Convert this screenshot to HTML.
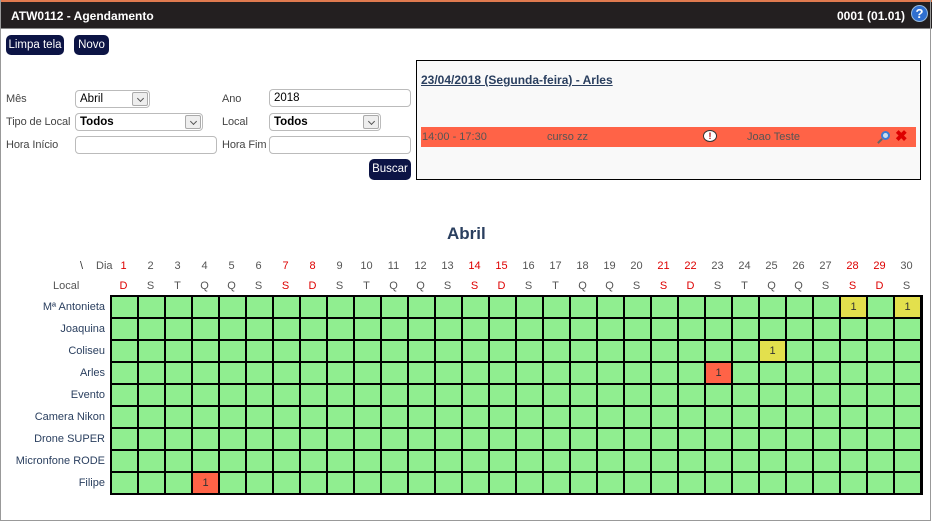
<!DOCTYPE html><html><head><meta charset="utf-8"><style>
*{margin:0;padding:0;box-sizing:border-box}
body{width:932px;height:522px;position:relative;background:#fff;font-family:"Liberation Sans",Arial,sans-serif;font-size:11px;color:#333;overflow:hidden}
.frame{position:absolute;left:0;top:0;width:931px;height:521px;border:1px solid #999;border-top:none}
.top{position:absolute;left:0;top:0;width:932px;height:2px;background:#e07a4f}
.bar{position:absolute;left:0;top:2px;width:932px;height:27px;background:#231f20;border-bottom:1px solid #888;color:#fff;font-weight:bold;font-size:12px}
.btn{position:absolute;background:#0c1445;color:#fff;border-radius:5px;font-size:11.5px;height:20px;line-height:20px;text-align:center}
.lbl{position:absolute;font-size:11px;color:#444;white-space:nowrap;letter-spacing:-0.1px}
.inp{position:absolute;border:1px solid #bbb;border-radius:4px;height:18px;background:#fff;font-size:11.5px;color:#000;padding-left:4px;line-height:16px}
.sel .ar{position:absolute;right:1px;top:1px;width:16px;height:14px;border:1px solid #aaa;border-radius:2px;background:#eee}
.sel .ar:after{content:"";position:absolute;left:5px;top:3px;width:4px;height:4px;border-right:1px solid #555;border-bottom:1px solid #555;transform:rotate(45deg)}
.grid{position:absolute;left:110px;top:295px;width:812px;height:200px;background-color:#90ee90;
background-image:linear-gradient(90deg,#000 2px,transparent 2px),linear-gradient(#000 2px,transparent 2px);background-size:27px 100%,100% 22px}
.c{position:absolute;width:25px;height:20px;text-align:center;line-height:20px;color:#333}
.y{background:#e3e04d}.r{background:#ff6347}
.h{position:absolute;width:27px;text-align:center;color:#555}
.red{color:#d00}
.rl{position:absolute;right:827px;color:#2a3f5f;white-space:nowrap}
</style></head><body>
<div class="top"></div>
<div class="bar"><span style="position:absolute;left:11px;top:7px">ATW0112 - Agendamento</span><span style="position:absolute;left:837px;top:7px">0001 (01.01)</span>
<span style="position:absolute;left:911px;top:3px;width:17px;height:17px;border-radius:50%;background:#2f6fd0;border:1px solid #9bd;color:#fff;text-align:center;line-height:16px;font-size:13px">?</span></div>
<div class="frame"></div>
<div class="btn" style="left:6px;top:35px;width:58px">Limpa tela</div>
<div class="btn" style="left:74px;top:35px;width:35px">Novo</div>
<div class="lbl" style="left:6px;top:93px">Mês</div>
<div class="inp sel" style="left:75px;top:90px;width:75px">Abril<span class="ar"></span></div>
<div class="lbl" style="left:222px;top:93px">Ano</div>
<div class="inp" style="left:269px;top:89px;width:142px">2018</div>
<div class="lbl" style="left:6px;top:116px">Tipo de Local</div>
<div class="inp sel" style="left:75px;top:113px;width:128px;font-weight:bold">Todos<span class="ar"></span></div>
<div class="lbl" style="left:222px;top:116px">Local</div>
<div class="inp sel" style="left:269px;top:113px;width:112px;font-weight:bold">Todos<span class="ar"></span></div>
<div class="lbl" style="left:6px;top:139px">Hora Início</div>
<div class="inp" style="left:75px;top:136px;width:142px"></div>
<div class="lbl" style="left:222px;top:139px">Hora Fim</div>
<div class="inp" style="left:269px;top:136px;width:142px"></div>
<div class="btn" style="left:369px;top:159px;height:21px;line-height:21px;width:42px">Buscar</div>
<div style="position:absolute;left:416px;top:60px;width:505px;height:120px;border:1px solid #000;background:#f9f9f9">
<div style="position:absolute;left:4px;top:12px;font-weight:bold;color:#2a3f5f;text-decoration:underline;font-size:12px">23/04/2018 (Segunda-feira) - Arles</div>
<div style="position:absolute;left:4px;top:66px;width:495px;height:20px;background:#ff6347;color:#555;line-height:20px">
<span style="position:absolute;left:1px">14:00 - 17:30</span><span style="position:absolute;left:126px">curso zz</span>
<span style="position:absolute;left:282px;top:3px;width:14px;height:12px;border-radius:50%;background:#fff;border:1px solid #333;font-size:9px;line-height:10px;text-align:center;color:#a00;font-weight:bold">!</span>
<span style="position:absolute;left:326px">Joao Teste</span>
<span style="position:absolute;left:460px;top:4px;width:9px;height:9px;border:2px solid #3a7bd5;border-radius:50%;background:#cde"></span>
<span style="position:absolute;left:456px;top:13px;width:6px;height:2px;background:#666;transform:rotate(-45deg)"></span>
<span style="position:absolute;left:474px;color:#d00;font-weight:bold;font-size:15px">✖</span></div></div>
<span style="position:absolute;left:447px;top:224px;font-size:17px;font-weight:bold;color:#2a3f5f">Abril</span>
<div style="position:absolute;top:260px;left:0;width:932px">
<span style="position:absolute;left:80px">\</span><span style="position:absolute;left:96px;color:#555">Dia</span>
<span class="h red" style="left:110px">1</span><span class="h" style="left:137px">2</span><span class="h" style="left:164px">3</span><span class="h" style="left:191px">4</span><span class="h" style="left:218px">5</span><span class="h" style="left:245px">6</span><span class="h red" style="left:272px">7</span><span class="h red" style="left:299px">8</span><span class="h" style="left:326px">9</span><span class="h" style="left:353px">10</span><span class="h" style="left:380px">11</span><span class="h" style="left:407px">12</span><span class="h" style="left:434px">13</span><span class="h red" style="left:461px">14</span><span class="h red" style="left:488px">15</span><span class="h" style="left:515px">16</span><span class="h" style="left:542px">17</span><span class="h" style="left:569px">18</span><span class="h" style="left:596px">19</span><span class="h" style="left:623px">20</span><span class="h red" style="left:650px">21</span><span class="h red" style="left:677px">22</span><span class="h" style="left:704px">23</span><span class="h" style="left:731px">24</span><span class="h" style="left:758px">25</span><span class="h" style="left:785px">26</span><span class="h" style="left:812px">27</span><span class="h red" style="left:839px">28</span><span class="h red" style="left:866px">29</span><span class="h" style="left:893px">30</span></div>
<div style="position:absolute;top:280px;left:0;width:932px">
<span style="position:absolute;left:53px;color:#555">Local</span>
<span class="h red" style="left:110px">D</span><span class="h" style="left:137px">S</span><span class="h" style="left:164px">T</span><span class="h" style="left:191px">Q</span><span class="h" style="left:218px">Q</span><span class="h" style="left:245px">S</span><span class="h red" style="left:272px">S</span><span class="h red" style="left:299px">D</span><span class="h" style="left:326px">S</span><span class="h" style="left:353px">T</span><span class="h" style="left:380px">Q</span><span class="h" style="left:407px">Q</span><span class="h" style="left:434px">S</span><span class="h red" style="left:461px">S</span><span class="h red" style="left:488px">D</span><span class="h" style="left:515px">S</span><span class="h" style="left:542px">T</span><span class="h" style="left:569px">Q</span><span class="h" style="left:596px">Q</span><span class="h" style="left:623px">S</span><span class="h red" style="left:650px">S</span><span class="h red" style="left:677px">D</span><span class="h" style="left:704px">S</span><span class="h" style="left:731px">T</span><span class="h" style="left:758px">Q</span><span class="h" style="left:785px">Q</span><span class="h" style="left:812px">S</span><span class="h red" style="left:839px">S</span><span class="h red" style="left:866px">D</span><span class="h" style="left:893px">S</span></div>
<span class="rl" style="top:301px">Mª Antonieta</span>
<span class="rl" style="top:323px">Joaquina</span>
<span class="rl" style="top:345px">Coliseu</span>
<span class="rl" style="top:367px">Arles</span>
<span class="rl" style="top:389px">Evento</span>
<span class="rl" style="top:411px">Camera Nikon</span>
<span class="rl" style="top:433px">Drone SUPER</span>
<span class="rl" style="top:455px">Micronfone RODE</span>
<span class="rl" style="top:477px">Filipe</span>
<div class="grid"></div>
<div style="position:absolute;left:921px;top:295px;width:2px;height:200px;background:#000"></div>
<div style="position:absolute;left:110px;top:493px;width:813px;height:2px;background:#000"></div>
<div class="c y" style="left:841px;top:297px">1</div>
<div class="c y" style="left:895px;top:297px">1</div>
<div class="c y" style="left:760px;top:341px">1</div>
<div class="c r" style="left:706px;top:363px">1</div>
<div class="c r" style="left:193px;top:473px">1</div>
</body></html>
